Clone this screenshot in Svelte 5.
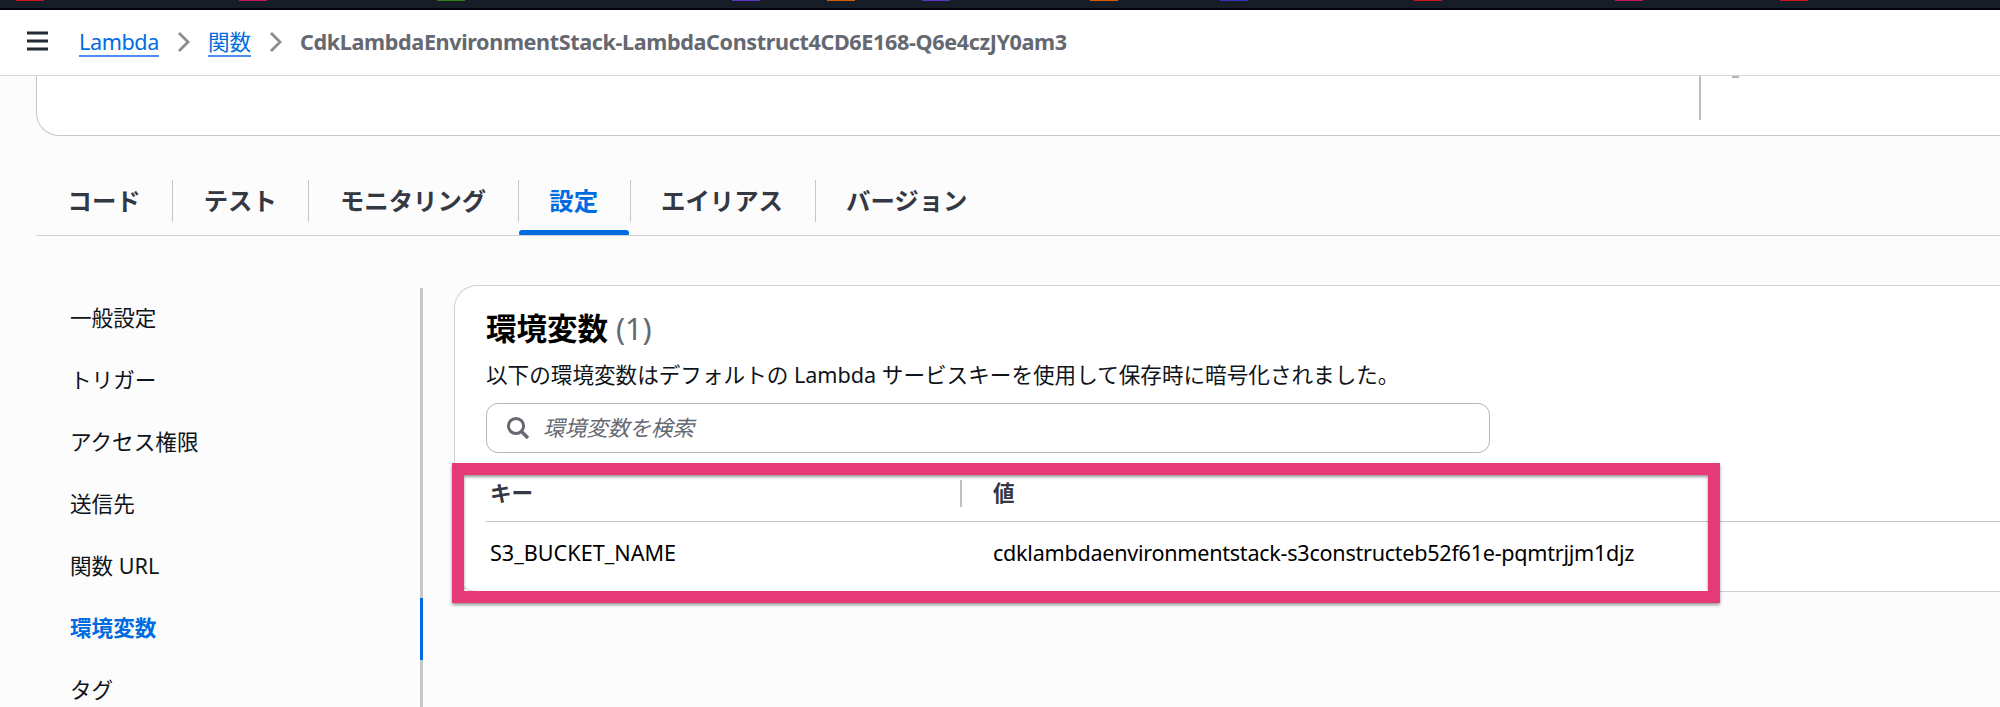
<script lang="ts">
  const favorites = [
    { left: 16, color: '#c7161d' },
    { left: 239, color: '#c2185b' },
    { left: 437, color: '#2f7d14' },
    { left: 732, color: '#5f34c0' },
    { left: 827, color: '#d45b07' },
    { left: 922, color: '#5f34c0' },
    { left: 1090, color: '#d45b07' },
    { left: 1220, color: '#3334b9' },
    { left: 1414, color: '#c7161d' },
    { left: 1615, color: '#c2185b' },
    { left: 1780, color: '#c7161d' },
  ];

  const tabs = ['コード', 'テスト', 'モニタリング', '設定', 'エイリアス', 'バージョン'];
  const menu = ['一般設定', 'トリガー', 'アクセス権限', '送信先', '関数 URL', '環境変数', 'タグ'];

  let activeTab = $state('設定');
  let activeItem = $state('環境変数');

  const variables = [
    { key: 'S3_BUCKET_NAME', value: 'cdklambdaenvironmentstack-s3constructeb52f61e-pqmtrjjm1djz' },
  ];
</script>

{#snippet chevron()}
  <svg class="chevron" width="14" height="22" viewBox="0 0 14 22">
    <path d="M2 2 L11 11 L2 20" fill="none" stroke="#8c8c94" stroke-width="2.8" />
  </svg>
{/snippet}

<div class="page">
  <div class="favorites">
    {#each favorites as f}
      <span class="favorite" style="left: {f.left}px; background: {f.color}"></span>
    {/each}
  </div>

  <header class="topnav">
    <svg class="menu-icon" width="21" height="20" viewBox="0 0 21 20">
      <path d="M0 2H21M0 10H21M0 18H21" stroke="#232b37" stroke-width="3" />
    </svg>
    <a class="crumb lambda" href="#lambda">Lambda</a>
    {@render chevron()}
    <a class="crumb" href="#functions">関数</a>
    {@render chevron()}
    <span class="current">CdkLambdaEnvironmentStack-LambdaConstruct4CD6E168-Q6e4czJY0am3</span>
  </header>

  <main>
    <section class="overview">
      <div class="overview-side"><span class="dash"></span></div>
    </section>

    <nav class="tabs">
      {#each tabs as tab}
        <button class="tab" class:active={tab === activeTab} onclick={() => (activeTab = tab)}>
          {tab}
        </button>
      {/each}
    </nav>

    <div class="columns">
      <ul class="side">
        {#each menu as item}
          <li class:active={item === activeItem}>
            <button onclick={() => (activeItem = item)}>{item}</button>
          </li>
        {/each}
      </ul>

      <section class="panel">
        <h2>環境変数 <span class="count">(1)</span></h2>
        <p class="desc">以下の環境変数はデフォルトの Lambda サービスキーを使用して保存時に暗号化されました。</p>
        <div class="search">
          <svg width="24" height="24" viewBox="0 0 24 24" fill="none" stroke="#656871">
            <circle cx="10" cy="10" r="7.6" stroke-width="3" />
            <path d="M15.5 15.5 L22 22" stroke-width="3.4" />
          </svg>
          <span>環境変数を検索</span>
        </div>

        <div class="table">
          <div class="row head">
            <div class="cell">キー</div>
            <div class="cell">値</div>
          </div>
          {#each variables as v}
            <div class="row">
              <div class="cell">{v.key}</div>
              <div class="cell value">{v.value}</div>
            </div>
          {/each}
        </div>
        <div class="highlight"></div>
      </section>
    </div>
  </main>
</div>

<style>
:global(body) {
  background: #fcfcfd;
  overflow: hidden;
}

.page {
  height: 707px;
  overflow: hidden;
  font-family: 'Noto Sans', 'Noto Sans CJK JP', sans-serif;
  font-size: 21.6px;
  line-height: 30px;
  color: #0f141a;
  white-space: nowrap;
}

button {
  font: inherit;
  color: inherit;
  background: none;
  border: 0;
  padding: 0;
}

.favorites {
  position: relative;
  height: 8px;
  background: #161d26;
  border-bottom: 2px solid #00040c;
}

.favorite {
  position: absolute;
  top: 0;
  width: 28px;
  height: 1px;
}

.topnav {
  display: flex;
  align-items: center;
  box-sizing: border-box;
  height: 66px;
  padding: 0 0 1px 27px;
  background: #fff;
  border-bottom: 1px solid #d4d4da;
}

.menu-icon {
  margin: 0 31px 3px 0;
}

.crumb {
  height: 27px;
  line-height: 27px;
  color: #006ce0;
  text-decoration: none;
  border-bottom: 2px solid #4c8ff0;
}

.crumb.lambda {
  letter-spacing: -0.4px;
}

.chevron {
  margin: 0 17px 0 18px;
}

.current {
  font-weight: 700;
  letter-spacing: -0.38px;
  color: #656871;
}

.overview {
  box-sizing: border-box;
  height: 60px;
  margin-left: 36px;
  background: #fff;
  border: solid #c6c6cd;
  border-width: 0 0 1px 1px;
  border-bottom-left-radius: 23px;
}

.overview-side {
  height: 44px;
  margin-left: 1662px;
  border-left: 2px solid #bcbcc5;
}

.dash {
  display: block;
  width: 7px;
  height: 2px;
  margin-left: 31px;
  background: #b4b4bb;
}

.tabs {
  display: flex;
  align-items: flex-end;
  height: 99px;
  margin-left: 36px;
  border-bottom: 1px solid #d0d0d6;
}

.tab {
  position: relative;
  height: 69px;
  padding: 0 31.5px;
  font-size: 24.4px;
  font-weight: 700;
  line-height: 67px;
  color: #333843;
}

.tab:not(:last-child)::before {
  content: '';
  position: absolute;
  right: -1px;
  top: 14px;
  width: 1px;
  height: 42px;
  background: #c6c6cd;
}

.tab.active {
  color: #006ce0;
}

.tab.active::after {
  content: '';
  position: absolute;
  left: 1px;
  right: 1px;
  bottom: 0;
  height: 5px;
  background: #006ce0;
  border-radius: 3px 3px 1px 1px;
}

.columns {
  display: flex;
  padding-top: 49px;
}

.side {
  width: 353px;
  height: 434px;
  margin: 3px 31px 0 70px;
  padding: 0;
  list-style: none;
}

.side li {
  height: 62px;
  line-height: 60px;
  border-right: 3px solid #c6c6cd;
}

.side li.active {
  font-weight: 700;
  color: #006ce0;
  border-right-color: #006ce0;
}

.panel {
  position: relative;
  flex: 1;
  box-sizing: border-box;
  height: 307px;
  padding: 22px 0 0 31px;
  background: #fff;
  border: solid #d0d0d6;
  border-width: 1px 0 1px 1px;
  border-radius: 23px 0 0 23px;
}

h2 {
  margin: 0;
  font-size: 30.5px;
  line-height: 40px;
  font-weight: 700;
  color: #000;
}

.count {
  font-weight: 400;
  color: #656871;
}

.desc {
  margin: 12px 0 0;
}

.search {
  display: flex;
  align-items: center;
  gap: 13px;
  box-sizing: border-box;
  width: 1004px;
  height: 50px;
  margin-top: 13px;
  padding-left: 19px;
  border: 1px solid #b4b4bb;
  border-radius: 12px;
}

.search span {
  font-style: italic;
  color: #656871;
}

.table {
  margin-top: 11px;
}

.row {
  display: grid;
  grid-template-columns: 475px 1fr;
  height: 63px;
  line-height: 61px;
  color: #000;
}

.row.head {
  height: 57px;
  line-height: 58px;
  font-weight: 700;
  color: #333843;
  border-bottom: 1px solid #c6c6cd;
}

.cell {
  position: relative;
  padding-left: 4px;
}

.cell + .cell {
  padding-left: 32px;
}

.cell.value {
  letter-spacing: -0.27px;
}

.head .cell:first-child::after {
  content: '';
  position: absolute;
  right: -1px;
  top: 16px;
  width: 2px;
  height: 27px;
  background: #c0c0ca;
}

/* annotation frame drawn over the table */
.highlight {
  position: absolute;
  left: -3px;
  top: 177px;
  width: 1244px;
  height: 116px;
  border: 12px solid #e63977;
  box-shadow: 0 2px 3px rgba(0, 0, 0, 0.4), inset 0 2px 3px rgba(0, 0, 0, 0.4);
}
</style>
